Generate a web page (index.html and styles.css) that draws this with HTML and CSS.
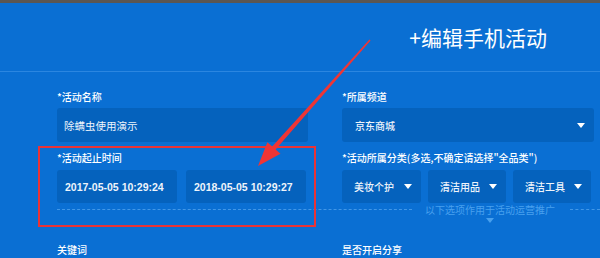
FILE: index.html
```html
<!DOCTYPE html>
<html lang="zh-CN">
<head>
<meta charset="utf-8">
<title>编辑手机活动</title>
<link rel="stylesheet" href="styles.css">
</head>
<body>
<div class="page">
  <div class="topbar"></div>
  <header class="header">
    <h1 class="title">+编辑手机活动</h1>
  </header>
  <form class="form">
    <div class="field">
      <label class="label">*活动名称</label>
      <div class="input input-tall">除螨虫使用演示</div>
    </div>
    <div class="field">
      <label class="label">*所属频道</label>
      <div class="input input-tall select select-wide"><span>京东商城</span><i class="caret"></i></div>
    </div>
    <div class="field field-gap">
      <label class="label">*活动起止时间</label>
      <div class="dates">
        <div class="input date">2017-05-05 10:29:24</div>
        <div class="input date">2018-05-05 10:29:27</div>
      </div>
    </div>
    <div class="field field-gap">
      <label class="label">*活动所属分类(多选,不确定请选择"全品类")</label>
      <div class="cats">
        <div class="input select"><span>美妆个护</span><i class="caret"></i></div>
        <div class="input select"><span>清洁用品</span><i class="caret"></i></div>
        <div class="input select"><span>清洁工具</span><i class="caret"></i></div>
      </div>
    </div>
    <div class="divider">
      <span class="dash dash-left"></span>
      <div class="divider-text">
        <span>以下选项作用于活动运营推广</span>
        <i class="divider-caret"></i>
      </div>
      <span class="dash dash-right"></span>
    </div>
    <div class="field field-last">
      <label class="label">关键词</label>
    </div>
    <div class="field field-last">
      <label class="label">是否开启分享</label>
    </div>
  </form>
  <svg class="annotation" width="600" height="258" viewBox="0 0 600 258">
    <rect x="39" y="147" width="276" height="79" fill="none" stroke="#ea3336" stroke-width="2"/>
    <polygon fill="#ef3535" points="258,166 280.5,153.8 275.6,149.4 370.6,40.6 369.4,39.4 272.2,146.6 267.4,142.2"/>
  </svg>
</div>
</body>
</html>
```

FILE: styles.css
```css
html, body {
  margin: 0;
  padding: 0;
  background: #0a6fd3;
}
body {
  font-family: "Noto Sans CJK SC", "Liberation Sans", sans-serif;
  color: #ffffff;
  overflow: hidden;
}
.page {
  position: relative;
  width: 600px;
  height: 258px;
  overflow: hidden;
  background: #0a6fd3;
}
.topbar {
  height: 3px;
  background: #5b5651;
}
.header {
  height: 68px;
  display: flex;
  align-items: center;
  justify-content: flex-end;
  padding-right: 53px;
  border-bottom: 1px solid #2b86e0;
}
.title {
  margin: 0;
  font-size: 21px;
  font-weight: 400;
  line-height: 26px;
  color: #ffffff;
  letter-spacing: 0;
}
.form {
  display: grid;
  grid-template-columns: 251px 252px;
  column-gap: 34px;
  padding: 18px 0 0 57px;
}
.field {
  display: flex;
  flex-direction: column;
}
.field-gap {
  margin-top: 9px;
}
.label {
  font-size: 10px;
  font-weight: 500;
  line-height: 14px;
  color: #ffffff;
  white-space: nowrap;
}
.input {
  margin-top: 4px;
  background: #0562bd;
  border-radius: 3px;
  box-sizing: border-box;
  color: #eef4fb;
  display: flex;
  align-items: center;
}
.input-tall {
  height: 34px;
  padding-left: 7px;
  font-size: 10.5px;
}
.select {
  justify-content: space-between;
  padding: 0 9px 0 12px;
  font-size: 10px;
  font-weight: 500;
}
.select-wide {
  padding-left: 13px;
}
.caret {
  width: 0;
  height: 0;
  border-left: 4px solid transparent;
  border-right: 4px solid transparent;
  border-top: 5px solid #ffffff;
}
.dates {
  display: flex;
  gap: 9px;
  margin-top: 5px;
}
.dates .input {
  margin-top: 0;
}
.date {
  width: 120px;
  height: 33px;
  padding-left: 8px;
  font-family: "Liberation Sans", sans-serif;
  font-weight: 700;
  font-size: 10.5px;
}
.cats {
  display: flex;
  gap: 7px;
  margin-top: 5px;
}
.cats .input {
  margin-top: 0;
  width: 78px;
  height: 33px;
}
.cats .input:first-child {
  width: 79px;
}
.divider {
  grid-column: 1 / 3;
  display: flex;
  align-items: flex-start;
  margin-right: -6px;
}
.dash {
  display: block;
  margin-top: 6px;
  border-top: 1px dashed #4197e8;
  height: 0;
}
.dash-left {
  width: 355px;
}
.dash-right {
  flex: 1;
}
.divider-text {
  display: flex;
  flex-direction: column;
  align-items: center;
  padding: 0 15px 0 13px;
  font-size: 10px;
  line-height: 13px;
  color: #48a0ee;
  white-space: nowrap;
}
.divider-caret {
  margin-top: 2px;
  width: 0;
  height: 0;
  border-left: 4px solid transparent;
  border-right: 4px solid transparent;
  border-top: 5px solid #48a0ee;
}
.field-last {
  margin-top: 20px;
}
.annotation {
  position: absolute;
  left: 0;
  top: 0;
  pointer-events: none;
}
```
